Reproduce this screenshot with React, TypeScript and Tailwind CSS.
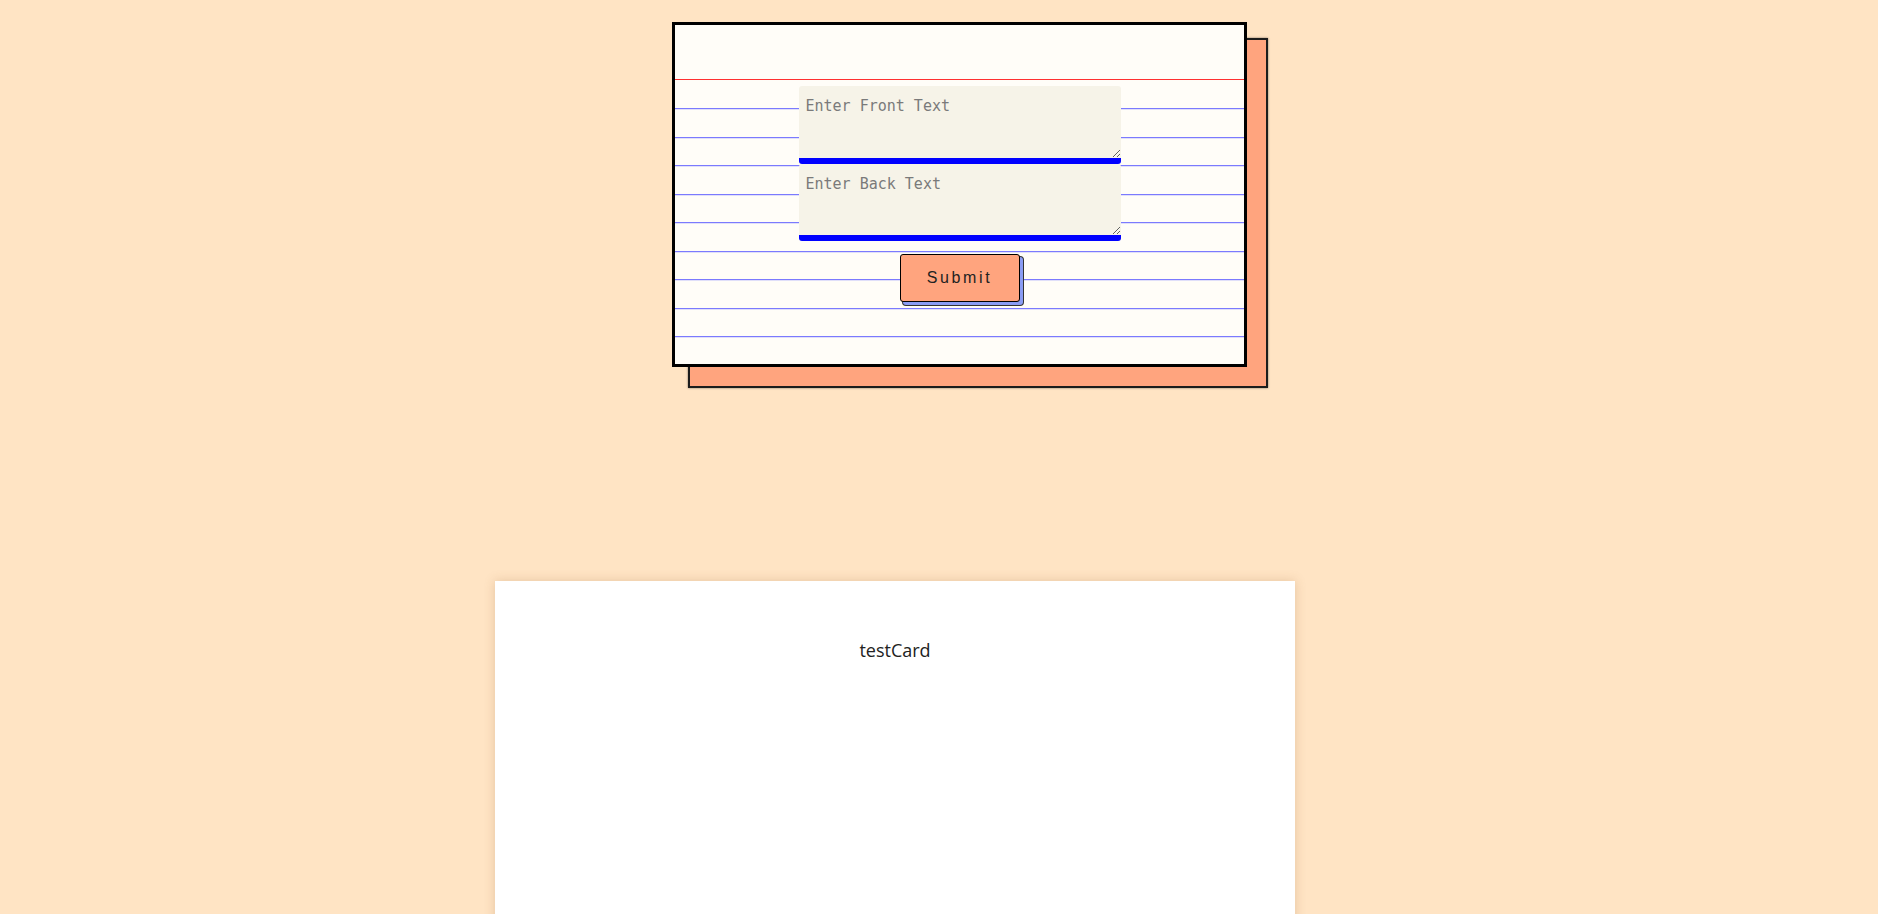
import React from 'react';

export default function App() {
  return (
    <div className="min-h-screen w-full bg-[#ffe4c4] overflow-hidden font-['Liberation_Sans',Arial,sans-serif]">
      {/* Flashcard editor */}
      <div className="pt-[22px] pl-[672px]">
        <div className="relative w-[575px] h-[345px]">
          {/* offset back card */}
          <div className="absolute left-[16px] top-[16px] w-[580px] h-[350px] bg-[#ffa47e] border-2 border-[#1c1c1c] shadow-[0_0_2px_rgba(0,0,0,0.5)]"></div>

          <div className="relative w-full h-full bg-[#fffdf8] border-[3px] border-black flex flex-col">
            <div className="h-[55px] shrink-0 border-b border-[#ff3030]"></div>
            <div className="flex-1 flex flex-col items-center pt-[6px] bg-[repeating-linear-gradient(to_bottom,transparent_0px,transparent_27.3px,#5c5cff_27.3px,#5c5cff_28.5px)] bg-[position:0_1.2px]">
              <textarea
                placeholder="Enter Front Text"
                className="w-[322px] h-[78px] block bg-[#f6f3e8] border-0 border-b-[6px] border-[#0000ff] rounded-[3px] px-[7px] pt-[12px] pb-[4px] text-[15px] leading-[17px] font-['DejaVu_Sans_Mono',monospace] text-[#333] placeholder:text-[#7a7a7a] outline-none"
              />
              <textarea
                placeholder="Enter Back Text"
                className="w-[322px] h-[77px] block bg-[#f6f3e8] border-0 border-b-[6px] border-[#0000ff] rounded-[3px] px-[7px] pt-[12px] pb-[4px] text-[15px] leading-[17px] font-['DejaVu_Sans_Mono',monospace] text-[#333] placeholder:text-[#7a7a7a] outline-none"
              />
              <button className="mt-[13px] w-[120px] h-[48px] bg-[#ffa47e] border border-black rounded-[3px] text-[16px] tracking-[2.6px] text-[#222] shadow-[3px_3px_0_0_#8a9cf4,3px_3px_0_1px_#333]">
                Submit
              </button>
            </div>
          </div>
        </div>
      </div>

      {/* Card list */}
      <div className="mt-[214px] ml-[495px] w-[800px] h-[500px] bg-white shadow-[0_0_10px_rgba(150,100,50,0.25)] pt-[56px] text-center">
        <p className="text-[18px] text-[#222] font-['Open_Sans','Noto_Sans',sans-serif]">testCard</p>
      </div>
    </div>
  );
}
